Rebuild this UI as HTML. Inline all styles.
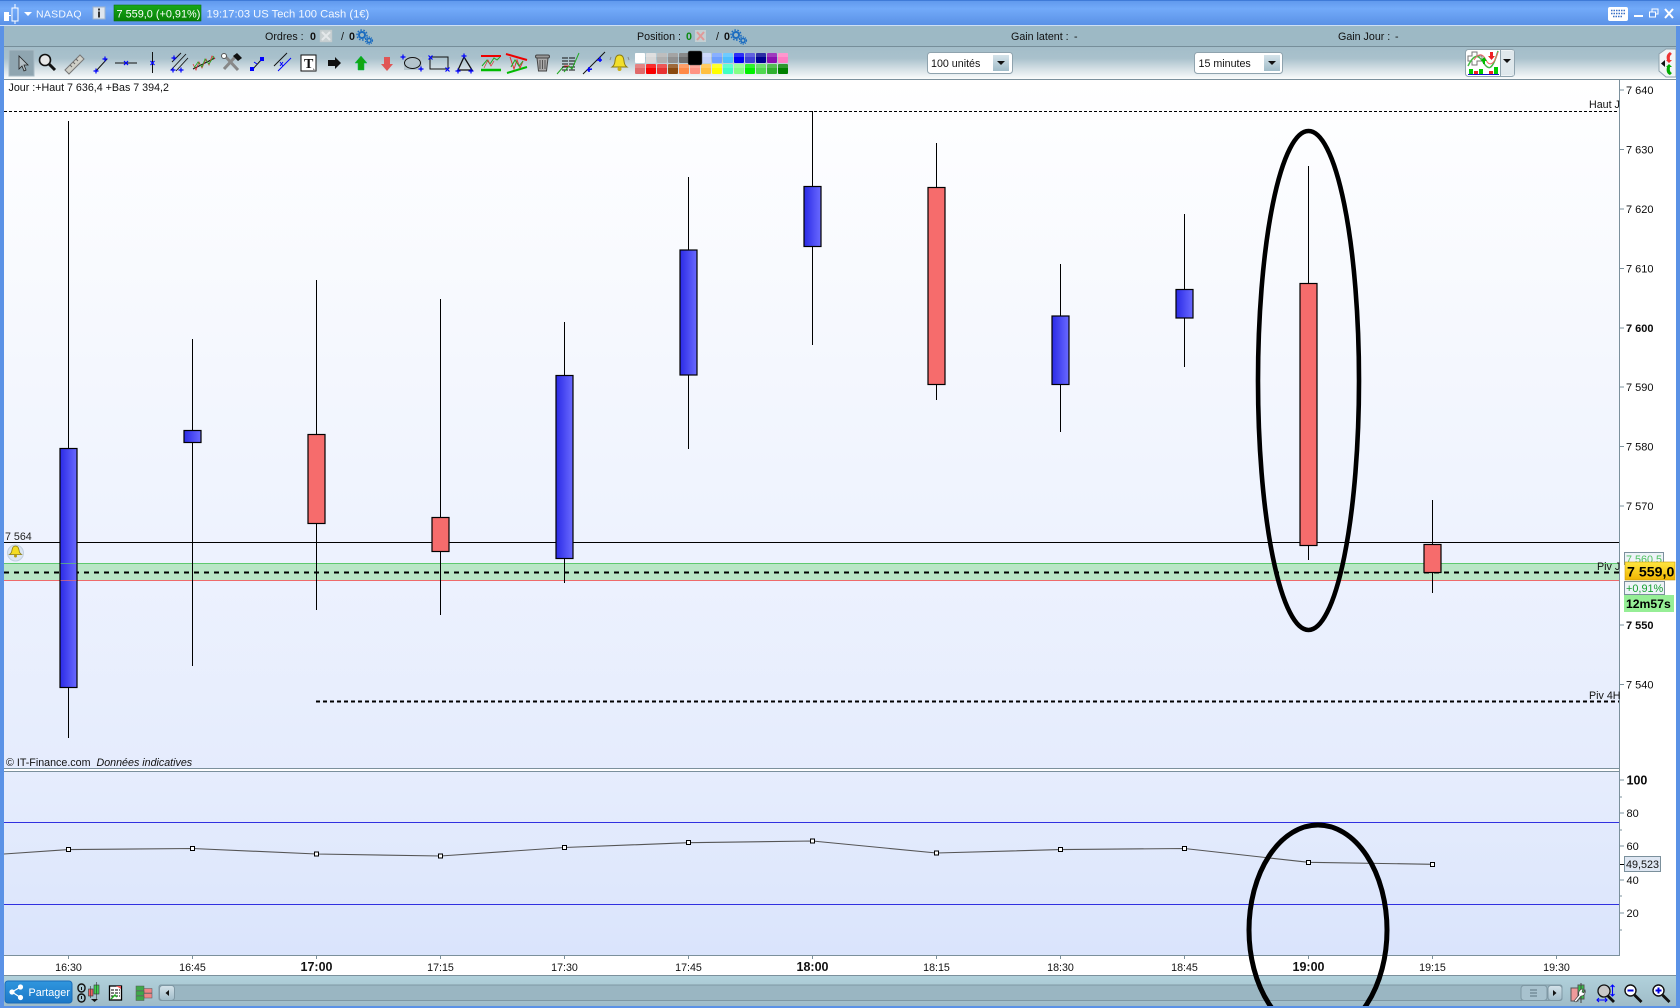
<!DOCTYPE html>
<html><head><meta charset="utf-8"><title>NASDAQ</title>
<style>
html,body{margin:0;padding:0;background:#fff;width:1680px;height:1008px;overflow:hidden}
svg{display:block}
text{font-family:"Liberation Sans",sans-serif;font-size:10.7px;fill:#111}
.b{font-weight:bold}
.ax{font-size:11px;fill:#0a0a0a}
.tk{stroke:#7b909c;stroke-width:1}
.w{stroke:#000;stroke-width:1}
.bl{fill:url(#blue);stroke:#000;stroke-width:1.2}
.rd{fill:#f66c6c;stroke:#000;stroke-width:1.2}
.pt{fill:#fff;stroke:#000;stroke-width:1}
</style></head><body>
<svg width="1680" height="1008" viewBox="0 0 1680 1008" xmlns="http://www.w3.org/2000/svg">
<defs>
<linearGradient id="title" x1="0" y1="0" x2="0" y2="1"><stop offset="0" stop-color="#5f98ec"/><stop offset=".35" stop-color="#72aaf9"/><stop offset="1" stop-color="#5a91e6"/></linearGradient>
<linearGradient id="tool" x1="0" y1="0" x2="0" y2="1"><stop offset="0" stop-color="#a3bdc9"/><stop offset=".35" stop-color="#a9c1cc"/><stop offset="1" stop-color="#fbfcfc"/></linearGradient>
<linearGradient id="chart" x1="0" y1="0" x2="0" y2="1"><stop offset="0" stop-color="#fff"/><stop offset="1" stop-color="#e5ecfd"/></linearGradient>
<linearGradient id="low" x1="0" y1="0" x2="0" y2="1"><stop offset="0" stop-color="#e6edfd"/><stop offset="1" stop-color="#dae4fc"/></linearGradient>
<linearGradient id="blue" x1="0" y1="0" x2="1" y2="0"><stop offset="0" stop-color="#2a2ae6"/><stop offset="1" stop-color="#6a6aff"/></linearGradient>
<linearGradient id="stat" x1="0" y1="0" x2="0" y2="1"><stop offset="0" stop-color="#b2d2dc"/><stop offset="1" stop-color="#9fbcc8"/></linearGradient>
<linearGradient id="yel" x1="0" y1="0" x2="0" y2="1"><stop offset="0" stop-color="#ffe640"/><stop offset="1" stop-color="#f0b400"/></linearGradient>
<linearGradient id="btn" x1="0" y1="0" x2="0" y2="1"><stop offset="0" stop-color="#d5e3ea"/><stop offset="1" stop-color="#a0bcc9"/></linearGradient>
<linearGradient id="ps" x1="0" y1="0" x2="0" y2="1"><stop offset="0" stop-color="#2f96de"/><stop offset="1" stop-color="#1c78c8"/></linearGradient>
<linearGradient id="gp" x1="0" y1="0" x2="0" y2="1"><stop offset="0" stop-color="#19a819"/><stop offset="1" stop-color="#068006"/></linearGradient>
<clipPath id="cl"><rect x="0" y="0" width="1676" height="1006"/></clipPath>
</defs>

<rect width="1680" height="1008" fill="#fff"/>
<!-- window frame -->
<rect width="1680" height="25" fill="url(#title)"/>
<rect width="1680" height="1" fill="#3f7bd8"/>
<rect y="25" width="1680" height="1" fill="#cfe0f5"/>
<rect x="0" y="26" width="1680" height="21" fill="#9db9c5"/>
<rect x="0" y="46" width="1680" height="1" fill="#768e9a"/>
<rect x="0" y="47" width="1680" height="32" fill="url(#tool)"/>
<rect x="4" y="79" width="1672" height="1" fill="#7b909c"/>

<!-- title bar -->
<g fill="#fff">
<rect x="4" y="12" width="5" height="9"/><rect x="8" y="15" width="3" height="1"/>
<rect x="12" y="8" width="6" height="13" fill="none" stroke="#fff"/><rect x="14.500" y="4" width="1" height="4"/><rect x="14.500" y="21" width="1" height="3"/>
<path d="M24 12h8l-4 4z"/>
</g>
<text x="36" y="17.500" style="fill:#f3f8ff;letter-spacing:.25px;font-size:10.500px">NASDAQ</text>
<rect x="93" y="7" width="12" height="12" fill="#dfe6ee" stroke="#9fb4cc"/><rect x="98" y="8.500" width="2" height="2" fill="#333"/><rect x="98" y="11.500" width="2" height="6" fill="#333"/>
<rect x="114" y="5" width="87" height="16" fill="url(#gp)" stroke="#0c6f0c" stroke-width=".6"/>
<text x="116.500" y="17.500" style="fill:#fff;font-size:10.900px">7 559,0 (+0,91%)</text>
<text x="206.500" y="17.500" style="fill:#f3f8ff;font-size:11.200px">19:17:03 US Tech 100 Cash (1€)</text>
<rect x="1608" y="7" width="20" height="14" rx="2" fill="#fff"/>
<path d="M1611 10.500h14M1611 13.500h14M1613 16.500h10" stroke="#3a6fc4" stroke-width="1.500" stroke-dasharray="1.500 1"/>
<rect x="1634" y="15" width="9" height="2" fill="#fff"/>
<rect x="1652" y="9" width="6" height="5" fill="none" stroke="#fff"/><rect x="1649.500" y="12" width="6" height="5" fill="#5f98ec" stroke="#fff"/>
<path d="M1665 9l8 9M1673 9l-8 9" stroke="#fff" stroke-width="2"/>

<!-- row 2 -->
<text x="265" y="40">Ordres :</text><text x="310" y="40" class="b">0</text>
<rect x="320" y="30" width="12" height="12" fill="#c8d0d2" stroke="#b8c4c8" stroke-width=".5"/><path d="M322 32l8 8M330 32l-8 8" stroke="#e4e8ea" stroke-width="2"/>
<text x="341" y="40">/</text><text x="349" y="40" class="b">0</text>
<g fill="none" stroke="#1b6cc0"><circle cx="362" cy="35" r="3" stroke-width="2"/><circle cx="362" cy="35" r="5" stroke-width="1.500" stroke-dasharray="1.600 1.500"/><circle cx="369" cy="40.500" r="2" stroke-width="1.500"/><circle cx="369" cy="40.500" r="3.500" stroke-width="1.200" stroke-dasharray="1.300 1"/></g>
<text x="637" y="40">Position :</text><text x="686" y="40" class="b" style="fill:#0b8a12">0</text>
<rect x="695" y="30" width="11" height="12" fill="#c4cfd2"/><path d="M697 32l7 8M704 32l-7 8" stroke="#e09a9a" stroke-width="2"/>
<text x="716" y="40">/</text><text x="724" y="40" class="b">0</text>
<g fill="none" stroke="#1b6cc0"><circle cx="736" cy="35" r="3" stroke-width="2"/><circle cx="736" cy="35" r="5" stroke-width="1.500" stroke-dasharray="1.600 1.500"/><circle cx="743" cy="40.500" r="2" stroke-width="1.500"/><circle cx="743" cy="40.500" r="3.500" stroke-width="1.200" stroke-dasharray="1.300 1"/></g>
<text x="1011" y="40">Gain latent :</text><text x="1074" y="40">-</text>
<text x="1338" y="40">Gain Jour :</text><text x="1395" y="40">-</text>

<!-- toolbar icons -->
<rect x="9" y="50" width="25" height="26" fill="#8fa5b0" stroke="#a9bcc6"/>
<path d="M19 56v13l3-3 2 5 2-1-2-5h4z" fill="#b5c0c6" stroke="#222" stroke-width=".8"/>
<circle cx="45" cy="60" r="5.500" fill="#e8e8e8" stroke="#111" stroke-width="1.600"/><path d="M49 64l6 6" stroke="#111" stroke-width="3"/>
<path d="M65 70l15-15 4 4-15 15z" fill="#d0d0c8" stroke="#777"/><path d="M70 65l2 2M73 62l2 2M76 59l2 2" stroke="#666"/>
<path d="M96 71l11-12" stroke="#111"/><path d="M93.500 71h5M96 68.500v5M102.500 59h5M105 56.500v5" stroke="#00f" stroke-width="1.200"/>
<path d="M115 63h22" stroke="#111"/><path d="M124 61l4 4M128 61l-4 4" stroke="#00f" stroke-width="1.200"/>
<path d="M152.500 52v21" stroke="#111"/><path d="M150.500 61l4 4M154.500 61l-4 4" stroke="#00f" stroke-width="1.200"/>
<path d="M171 70l15-16M176 71l12-13M172 62l9-9" stroke="#111" stroke-width=".9"/><path d="M170.500 70h5M173 67.500v5M178.500 70h5M181 67.500v5M171.500 58h5M174 55.500v5" stroke="#00f" stroke-width="1.200"/>
<path d="M193 69l22-11" stroke="#111"/><path d="M193 64l3 6 3-8 3 6 4-9 3 6 3-9 3 3" fill="none" stroke="#d33" stroke-width=".8"/><path d="M194 68l4-6 4 5 3-8 4 5 5-8" fill="none" stroke="#2a2" stroke-width=".8"/>
<path d="M224 55l14 15M236 56l-12 13" stroke="#888" stroke-width="3"/><path d="M233 56l4-3 5 5-4 3z" fill="#111"/><circle cx="224" cy="56" r="2.500" fill="#fff" stroke="#555"/>
<path d="M252 70l10-11" stroke="#111"/><rect x="250" y="67" width="4" height="4" fill="#00f"/><rect x="260" y="57" width="4" height="4" fill="#00f"/><path d="M254 62l3 2" stroke="#00f"/>
<path d="M274 66l13-13" stroke="#111"/><path d="M278 71l13-13" stroke="#00f"/><path d="M280 62l3 4M283 62l-3 4" stroke="#00f"/>
<rect x="301" y="55" width="15" height="16" fill="#fff" stroke="#111"/><text x="304" y="68" class="b" style="font-family:'Liberation Serif',serif;font-size:14px">T</text><path d="M316 71l-3-3v3z" fill="#888"/>
<path d="M328 60h7v-3l6 6-6 6v-3h-7z" fill="#111"/>
<path d="M361 56l6 7h-3v7h-6v-7h-3z" fill="#12a612" stroke="#0b5" stroke-width=".5"/>
<path d="M387 71l6-7h-3v-7h-6v7h-3z" fill="#e05555"/>
<rect x="404" y="57" width="18" height="13" fill="#b4c4cc"/><ellipse cx="412.500" cy="63" rx="8" ry="5.500" fill="none" stroke="#111"/><path d="M400.500 57h5M403 54.500v5M418.500 69h5M421 66.500v5" stroke="#00f" stroke-width="1.200"/>
<rect x="430" y="57" width="18" height="12" fill="none" stroke="#111"/><path d="M428.500 55.500l4 4M432.500 55.500l-4 4M445.500 67.500l4 4M449.500 67.500l-4 4" stroke="#00f" stroke-width="1.200"/>
<path d="M464 57l-6 13h14z" fill="none" stroke="#111" stroke-width="1.300"/><path d="M461.500 56h5M464 53.500v5M455.500 71h5M458 68.500v5M468.500 71h5M471 68.500v5" stroke="#00f" stroke-width="1.200"/>
<path d="M481 56h20" stroke="#e00" stroke-width="2"/><path d="M481 70h20" stroke="#0b0" stroke-width="2.400"/><path d="M482 66l5-6 3 4 4-6 3 2 3-3" fill="none" stroke="#2a2"/><path d="M484 68l4-8 3 6 3-5" fill="none" stroke="#d33" stroke-width=".7"/>
<path d="M506 54l21 6" stroke="#e00" stroke-width="2"/><path d="M507 73l20-6" stroke="#0b0" stroke-width="2"/><path d="M510 57l4 12 3-9 3 8 3-7" fill="none" stroke="#d33"/><path d="M511 67l4-7 4 6 4-5" fill="none" stroke="#2a2"/>
<path d="M537 58h11l-1.500 13h-8z" fill="#aaa" stroke="#444"/><rect x="535.500" y="55" width="14" height="3" rx="1.500" fill="#999" stroke="#444"/><path d="M540 60v9M542.500 60v9M545 60v9" stroke="#555"/>
<path d="M557 74l7-8" stroke="#2a2"/><path d="M562 58h13M562 61h13M562 64h13M562 67h13M562 70h13" stroke="#111" stroke-dasharray="6 1"/><path d="M564 72l5-6 3 3 7-16" fill="none" stroke="#2a2"/><path d="M564 66h5" stroke="#d33"/>
<path d="M583 74l22-22" stroke="#111"/><path d="M587 70l5-1M589 67v5M597 60h5M600 57v5" stroke="#00f" stroke-width="1.500"/>
<path d="M619.500 55c-3 0-4 2-4.500 6-.3 3-1.500 5-3 6h15c-1.500-1-2.700-3-3-6-.5-4-1.500-6-4.500-6z" fill="#f2df2a" stroke="#8a7a10"/><circle cx="619.500" cy="69" r="2" fill="#c9b012"/><path d="M611 57l-1 3M628 57l1 3" stroke="#888"/>

<!-- palette -->
<g>
<rect x="635" y="53" width="10" height="10" rx="1" fill="#fff"/><rect x="646" y="53" width="10" height="10" rx="1" fill="#d8d8d8"/><rect x="657" y="53" width="10" height="10" rx="1" fill="#b0b0b0"/><rect x="668" y="53" width="10" height="10" rx="1" fill="#909090"/><rect x="679" y="53" width="10" height="10" rx="1" fill="#707070"/><rect x="701" y="53" width="10" height="10" rx="1" fill="#c4d2fa"/><rect x="712" y="53" width="10" height="10" rx="1" fill="#6f9fff"/><rect x="723" y="53" width="10" height="10" rx="1" fill="#4fc0ff"/><rect x="734" y="53" width="10" height="10" rx="1" fill="#0000f4"/><rect x="745" y="53" width="10" height="10" rx="1" fill="#4040d8"/><rect x="756" y="53" width="10" height="10" rx="1" fill="#000090"/><rect x="767" y="53" width="10" height="10" rx="1" fill="#8a12b0"/><rect x="778" y="53" width="10" height="10" rx="1" fill="#ff80c4"/>
<rect x="635" y="64" width="10" height="10" rx="1" fill="#e06a6a"/><rect x="646" y="64" width="10" height="10" rx="1" fill="#f80000"/><rect x="657" y="64" width="10" height="10" rx="1" fill="#e83232"/><rect x="668" y="64" width="10" height="10" rx="1" fill="#8a4a10"/><rect x="679" y="64" width="10" height="10" rx="1" fill="#ff8a48"/><rect x="690" y="64" width="10" height="10" rx="1" fill="#ff9484"/><rect x="701" y="64" width="10" height="10" rx="1" fill="#ffc040"/><rect x="712" y="64" width="10" height="10" rx="1" fill="#ffff00"/><rect x="723" y="64" width="10" height="10" rx="1" fill="#40ffc4"/><rect x="734" y="64" width="10" height="10" rx="1" fill="#84ff84"/><rect x="745" y="64" width="10" height="10" rx="1" fill="#00f000"/><rect x="756" y="64" width="10" height="10" rx="1" fill="#50d850"/><rect x="767" y="64" width="10" height="10" rx="1" fill="#30b030"/><rect x="778" y="64" width="10" height="10" rx="1" fill="#008000"/>
<rect x="635" y="53" width="153" height="4" fill="#fff" opacity=".18"/><rect x="635" y="64" width="153" height="4" fill="#fff" opacity=".18"/>
<rect x="688" y="51" width="14" height="14" rx="2" fill="#000" stroke="#555" stroke-width=".5"/>
</g>

<!-- dropdowns -->
<rect x="927.500" y="52.500" width="85" height="21" rx="3" fill="#fff" stroke="#8fa3ae"/>
<text x="931" y="67">100 unités</text>
<rect x="993" y="55" width="16" height="16" fill="url(#btn)"/><path d="M997 61h8l-4 4z" fill="#111"/>
<rect x="1194.500" y="52.500" width="88" height="21" rx="3" fill="#fff" stroke="#8fa3ae"/>
<text x="1198.500" y="67">15 minutes</text>
<rect x="1264" y="55" width="16" height="16" fill="url(#btn)"/><path d="M1268 61h8l-4 4z" fill="#111"/>

<!-- indicator button -->
<rect x="1465.500" y="49.500" width="49" height="27" rx="3" fill="#fff" stroke="#8fa3ae"/>
<rect x="1501" y="50.500" width="13" height="25" fill="#dfe8ec"/><path d="M1500.500 50v26" stroke="#8fa3ae"/><path d="M1503 59h8l-4 4z" fill="#111"/>
<path d="M1472 52h5v4h5v5h-5v4h-5v-4h-4v-5h4z" fill="#fff" stroke="#777"/>
<path d="M1468 66c6-12 10-12 15-4s9 10 15-11" fill="none" stroke="#4b4" stroke-width="1.500"/><path d="M1474 60c5-8 9-6 12 0s8 6 12-8" fill="none" stroke="#e66" stroke-width="1"/>
<path d="M1483 64v-3h-2l3-4 3 4h-2v3z" fill="#0b0"/><path d="M1490 52h3v4h2l-3.500 4-3.500-4h2z" fill="#e22"/>
<g fill="#0c0"><rect x="1469" y="69" width="4" height="5"/><rect x="1479" y="69" width="4" height="5"/><rect x="1494" y="67" width="4" height="7"/></g><g fill="#e22"><rect x="1474" y="71" width="4" height="3"/><rect x="1489" y="71" width="4" height="3"/></g><rect x="1468" y="74" width="31" height="1" fill="#11c"/>

<!-- right tab -->
<path d="M1676 49h-10l-7 5v17l7 6h10z" fill="#f1f4f6" stroke="#8fa3ae"/><path d="M1665 60v7l-4-3.500z" fill="#111"/>
<path d="M1670 52c-3 2-4 4-3 8l-1 0 3 3 3-3h-2c-.5-3 0-5 2-6z" fill="#e33"/><path d="M1670 75c-3-1-4-4-3-8h-1l3-3 3 3h-2c-.5 3 0 5 2 6z" fill="#0a0"/>

<!-- chart panel -->
<rect x="4" y="80" width="1615" height="688" fill="url(#chart)"/>
<rect x="4" y="768" width="1615" height="1" fill="#7b909c"/>
<rect x="4" y="772" width="1615" height="183" fill="url(#low)"/>
<rect x="4" y="771" width="1615" height="1" fill="#7b909c"/>
<rect x="4" y="955" width="1615" height="1" fill="#7b909c"/>
<rect x="1619" y="80" width="1" height="876" fill="#7b909c"/>

<!-- green band -->
<rect x="4" y="563" width="1615" height="17" fill="#b9e6c6"/>
<rect x="4" y="563" width="1615" height="1" fill="#5fc96f"/>
<rect x="4" y="580" width="1615" height="1" fill="#ee6a6a"/>
<rect x="4" y="542" width="1615" height="1" fill="#000"/>
<path d="M4 572.500H1619" stroke="#000" stroke-width="2" stroke-dasharray="5 5"/>
<path d="M4 111.500H1619" stroke="#000" stroke-dasharray="3 2"/>
<path d="M316 701.500H1619" stroke="#000" stroke-width="2" stroke-dasharray="4 3"/>

<!-- candles -->
<g>
<path class="w" d="M68.500 121V738M192.500 339V666M316.500 280V610M440.500 299V615M564.500 322V583M688.500 177V449M812.500 111V345M936.500 143V400M1060.500 264V432M1184.500 214V367M1308.500 166V560M1432.500 500V593"/>
<rect class="bl" x="60" y="448.500" width="17" height="239"/>
<rect class="bl" x="184" y="430.500" width="17" height="12"/>
<rect class="rd" x="308" y="434.500" width="17" height="89"/>
<rect class="rd" x="432" y="517.500" width="17" height="34"/>
<rect class="bl" x="556" y="375.500" width="17" height="183"/>
<rect class="bl" x="680" y="250" width="17" height="125"/>
<rect class="bl" x="804" y="186.500" width="17" height="60"/>
<rect class="rd" x="928" y="187.500" width="17" height="197"/>
<rect class="bl" x="1052" y="316" width="17" height="68.500"/>
<rect class="bl" x="1176" y="289.500" width="17" height="28.500"/>
<rect class="rd" x="1300" y="283.500" width="17" height="262"/>
<rect class="rd" x="1424" y="544.500" width="17" height="28"/>
</g>
<rect x="60.500" y="563" width="16" height="1" fill="#5fc96f" opacity=".7"/>
<rect x="60.500" y="580" width="16" height="1" fill="#ee6a6a" opacity=".7"/>

<!-- chart labels -->
<text x="8.500" y="91">Jour :+Haut 7 636,4 +Bas 7 394,2</text>
<text x="5" y="540" style="fill:#222">7 564</text>
<circle cx="15.500" cy="553" r="8" fill="#dbe5f1" stroke="#c2d0e0"/>
<path d="M15.500 546c-2.500 0-3.200 2-3.500 4-.2 2-1 3.500-2.500 4.500h12c-1.500-1-2.300-2.500-2.500-4.500-.3-2-1-4-3.500-4z" fill="#f4dc22" stroke="#8a7a10" stroke-width=".8"/><circle cx="15.500" cy="556" r="1.500" fill="#b49c10"/>
<text x="1589" y="108">Haut J</text>
<text x="1597" y="570">Piv J</text>
<text x="1589" y="699">Piv 4H</text>
<text x="6" y="766">© IT-Finance.com</text><text x="96.500" y="766" style="font-style:italic">Données indicatives</text>

<!-- axis -->
<g class="tk"><path d="M1620 90h4M1620 149.500h4M1620 209h4M1620 268.500h4M1620 328h4M1620 387h4M1620 446.500h4M1620 506h4M1620 625h4M1620 684.500h4M1620 780h4M1620 797h2M1620 813h4M1620 830h2M1620 846h4M1620 880h4M1620 896h2M1620 913h4M1620 930h2"/></g>
<path d="M1620 864.500h4" stroke="#000"/>
<text class="ax" x="1626" y="94">7 640</text>
<text class="ax" x="1626" y="153.500">7 630</text>
<text class="ax" x="1626" y="213">7 620</text>
<text class="ax" x="1626" y="272.500">7 610</text>
<text class="ax b" x="1626" y="332">7 600</text>
<text class="ax" x="1626" y="391">7 590</text>
<text class="ax" x="1626" y="450.500">7 580</text>
<text class="ax" x="1626" y="510">7 570</text>
<text class="ax b" x="1626" y="629">7 550</text>
<text class="ax" x="1626" y="688.500">7 540</text>

<rect x="1624.500" y="552.500" width="39" height="12" fill="#eef3f8" stroke="#7b909c"/>
<text x="1626" y="563" style="fill:#4fc25f;font-size:10.800px">7 560,5</text>
<rect x="1625" y="562" width="50" height="18" fill="url(#yel)" stroke="#c69a10" stroke-width=".6"/>
<text x="1627" y="576.500" class="b" style="font-size:14.200px;fill:#000">7 559,0</text>
<rect x="1624.500" y="581.500" width="40" height="13" fill="#eef3f8" stroke="#7b909c"/>
<text x="1626" y="592" style="fill:#16a030;font-size:10.900px">+0,91%</text>
<rect x="1624" y="595" width="50" height="17" fill="#96ee96"/>
<text x="1626" y="608" class="b" style="font-size:12.200px;fill:#000">12m57s</text>

<!-- lower panel -->
<rect x="4" y="822" width="1615" height="1" fill="#3030e0"/>
<rect x="4" y="904" width="1615" height="1" fill="#3030e0"/>
<polyline points="4,854 68.500,849.600 192.500,848.500 316.500,854 440.500,856 564.500,847.500 688.500,842.700 812.500,841 936.500,853 1060.500,849.600 1184.500,848.500 1308.500,862.300 1432.500,864.300" fill="none" stroke="#555" stroke-width="1.100"/>
<g>
<rect class="pt" x="66.500" y="847.500" width="4" height="4"/><rect class="pt" x="190.500" y="846.500" width="4" height="4"/><rect class="pt" x="314.500" y="852" width="4" height="4"/><rect class="pt" x="438.500" y="854" width="4" height="4"/><rect class="pt" x="562.500" y="845.500" width="4" height="4"/><rect class="pt" x="686.500" y="840.500" width="4" height="4"/><rect class="pt" x="810.500" y="839" width="4" height="4"/><rect class="pt" x="934.500" y="851" width="4" height="4"/><rect class="pt" x="1058.500" y="847.500" width="4" height="4"/><rect class="pt" x="1182.500" y="846.500" width="4" height="4"/><rect class="pt" x="1306.500" y="860.500" width="4" height="4"/><rect class="pt" x="1430.500" y="862.500" width="4" height="4"/>
</g>
<text class="ax b" x="1626.500" y="784.500" style="font-size:12.500px">100</text>
<text class="ax" x="1626.500" y="817">80</text>
<text class="ax" x="1626.500" y="850">60</text>
<text class="ax" x="1626.500" y="884">40</text>
<text class="ax" x="1626.500" y="917">20</text>
<rect x="1624.500" y="856.500" width="36" height="15" fill="#dfe7f3" stroke="#7b909c"/>
<text x="1626" y="868" style="font-size:10.800px">49,523</text>

<!-- time axis -->
<g class="tk"><path d="M68.500 955v4M192.500 955v4M316.500 955v4M440.500 955v4M564.500 955v4M688.500 955v4M812.500 955v4M936.500 955v4M1060.500 955v4M1184.500 955v4M1308.500 955v4M1432.500 955v4M1556.500 955v4"/></g>
<g text-anchor="middle">
<text x="68.500" y="971">16:30</text><text x="192.500" y="971">16:45</text><text x="316.500" y="971" class="b" style="font-size:12.500px">17:00</text><text x="440.500" y="971">17:15</text><text x="564.500" y="971">17:30</text><text x="688.500" y="971">17:45</text><text x="812.500" y="971" class="b" style="font-size:12.500px">18:00</text><text x="936.500" y="971">18:15</text><text x="1060.500" y="971">18:30</text><text x="1184.500" y="971">18:45</text><text x="1308.500" y="971" class="b" style="font-size:12.500px">19:00</text><text x="1432.500" y="971">19:15</text><text x="1556.500" y="971">19:30</text>
</g>

<!-- status bar -->
<rect x="4" y="975" width="1672" height="31" fill="url(#stat)"/>
<rect x="4" y="975" width="1672" height="1" fill="#7b909c"/>
<rect x="159" y="985" width="1403" height="15.500" rx="2" fill="#9ab6c2" stroke="#7f98a4"/>
<rect x="5" y="981" width="67" height="22" rx="3" fill="url(#ps)" stroke="#1a6cb8"/>
<g fill="#fff"><circle cx="12" cy="992" r="2.600"/><circle cx="20.500" cy="987" r="2.600"/><circle cx="20.500" cy="997.500" r="2.600"/></g><path d="M12 992l8.500-5M12 992l8.500 5.500" stroke="#fff" stroke-width="1.200"/>
<text x="28.500" y="996" style="fill:#fff;font-size:10.800px">Partager</text>
<g fill="none" stroke="#111" stroke-width="1.400"><rect x="78" y="984" width="7" height="8" rx="3.500"/><rect x="78" y="994" width="7" height="8" rx="3.500"/></g>
<path d="M81.500 987v3M81.500 996v3" stroke="#111"/>
<rect x="88.500" y="989" width="4.500" height="7" fill="#f06060" stroke="#333" stroke-width=".6"/><path d="M90.500 986v12" stroke="#333" stroke-width=".6"/>
<rect x="94" y="985" width="5" height="9" fill="#3fd04f" stroke="#333" stroke-width=".6"/><path d="M96.500 982v17" stroke="#333" stroke-width=".6"/><path d="M91 999h7l-3.500 3z" fill="#111"/>
<rect x="109.500" y="986" width="12" height="14" fill="#fff" stroke="#000" stroke-width="1.300"/><path d="M111 990h9M111 993h9M111 996h9" stroke="#000" stroke-dasharray="3 1"/><path d="M111 999l4-4 2 2" stroke="#2a2" fill="none" stroke-width="1.500"/><path d="M116 986h5v3z" fill="#e55"/>
<g stroke="#555" stroke-width=".5"><rect x="136" y="986" width="8" height="4.500" fill="#3fa84a"/><rect x="144" y="988.500" width="8" height="4.500" fill="#ef8484"/><rect x="136" y="991" width="8" height="4.500" fill="#3fa84a"/><rect x="144" y="993.500" width="8" height="4.500" fill="#ef8484"/><rect x="136" y="996" width="8" height="4.500" fill="#3fa84a"/></g>
<rect x="159.500" y="985.500" width="15" height="15" rx="3" fill="url(#btn)" stroke="#7f98a4"/><path d="M169 990v6l-3.500-3z" fill="#111"/>
<rect x="1521" y="985.500" width="26" height="15" rx="3" fill="#a8c2ce" stroke="#7f98a4"/><path d="M1530 990h7M1530 993h7M1530 996h7" stroke="#5b7480"/>
<rect x="1548" y="985.500" width="14" height="15" rx="3" fill="url(#btn)" stroke="#7f98a4"/><path d="M1553 990v6l3.500-3z" fill="#111"/>
<rect x="1571" y="988" width="7" height="13" fill="#ee9a9a" stroke="#555"/><rect x="1578" y="985" width="6" height="14" fill="#36c246" stroke="#555"/><path d="M1581 983v20" stroke="#444"/><path d="M1574 1001l5-6c-1-3 1-6 4-6l-1 3 2 1 1-3c1 3-1 6-4 6l-5 6z" fill="#fff" stroke="#333" stroke-width=".6"/>
<circle cx="1604" cy="991" r="6" fill="#c8c8c8" stroke="#111" stroke-width="1.300"/><path d="M1608 996l6 6" stroke="#111" stroke-width="2.800"/><path d="M1612.500 985v11M1610.500 987l2-2 2 2M1610.500 994l2 2 2-2M1597 1000h10M1599 998l-2 2 2 2M1605 998l2 2-2 2" stroke="#00f" fill="none" stroke-width="1.100"/>
<circle cx="1630.500" cy="990.500" r="5.500" fill="#fff" stroke="#111" stroke-width="1.400"/><path d="M1634.500 995l7 7" stroke="#111" stroke-width="2.800"/><path d="M1627.500 990.500h6" stroke="#00d" stroke-width="2"/>
<circle cx="1658.500" cy="990.500" r="5.500" fill="#fff" stroke="#111" stroke-width="1.400"/><path d="M1662.500 995l7 7" stroke="#111" stroke-width="2.800"/><path d="M1655.500 990.500h6M1658.500 987.500v6" stroke="#00d" stroke-width="2"/>

<!-- borders -->
<rect x="0" y="26" width="4" height="982" fill="#5b92e6"/>
<rect x="1676" y="26" width="4" height="982" fill="#5b92e6"/>
<rect x="0" y="1006" width="1680" height="2" fill="#5b92e6"/>

<!-- hand drawn ellipses -->
<g clip-path="url(#cl)" fill="none" stroke="#000">
<ellipse cx="1308.500" cy="380.500" rx="50.500" ry="249.500" stroke-width="4.600"/>
<ellipse cx="1318" cy="930" rx="69" ry="105" stroke-width="5"/>
</g>
</svg>
</body></html>
